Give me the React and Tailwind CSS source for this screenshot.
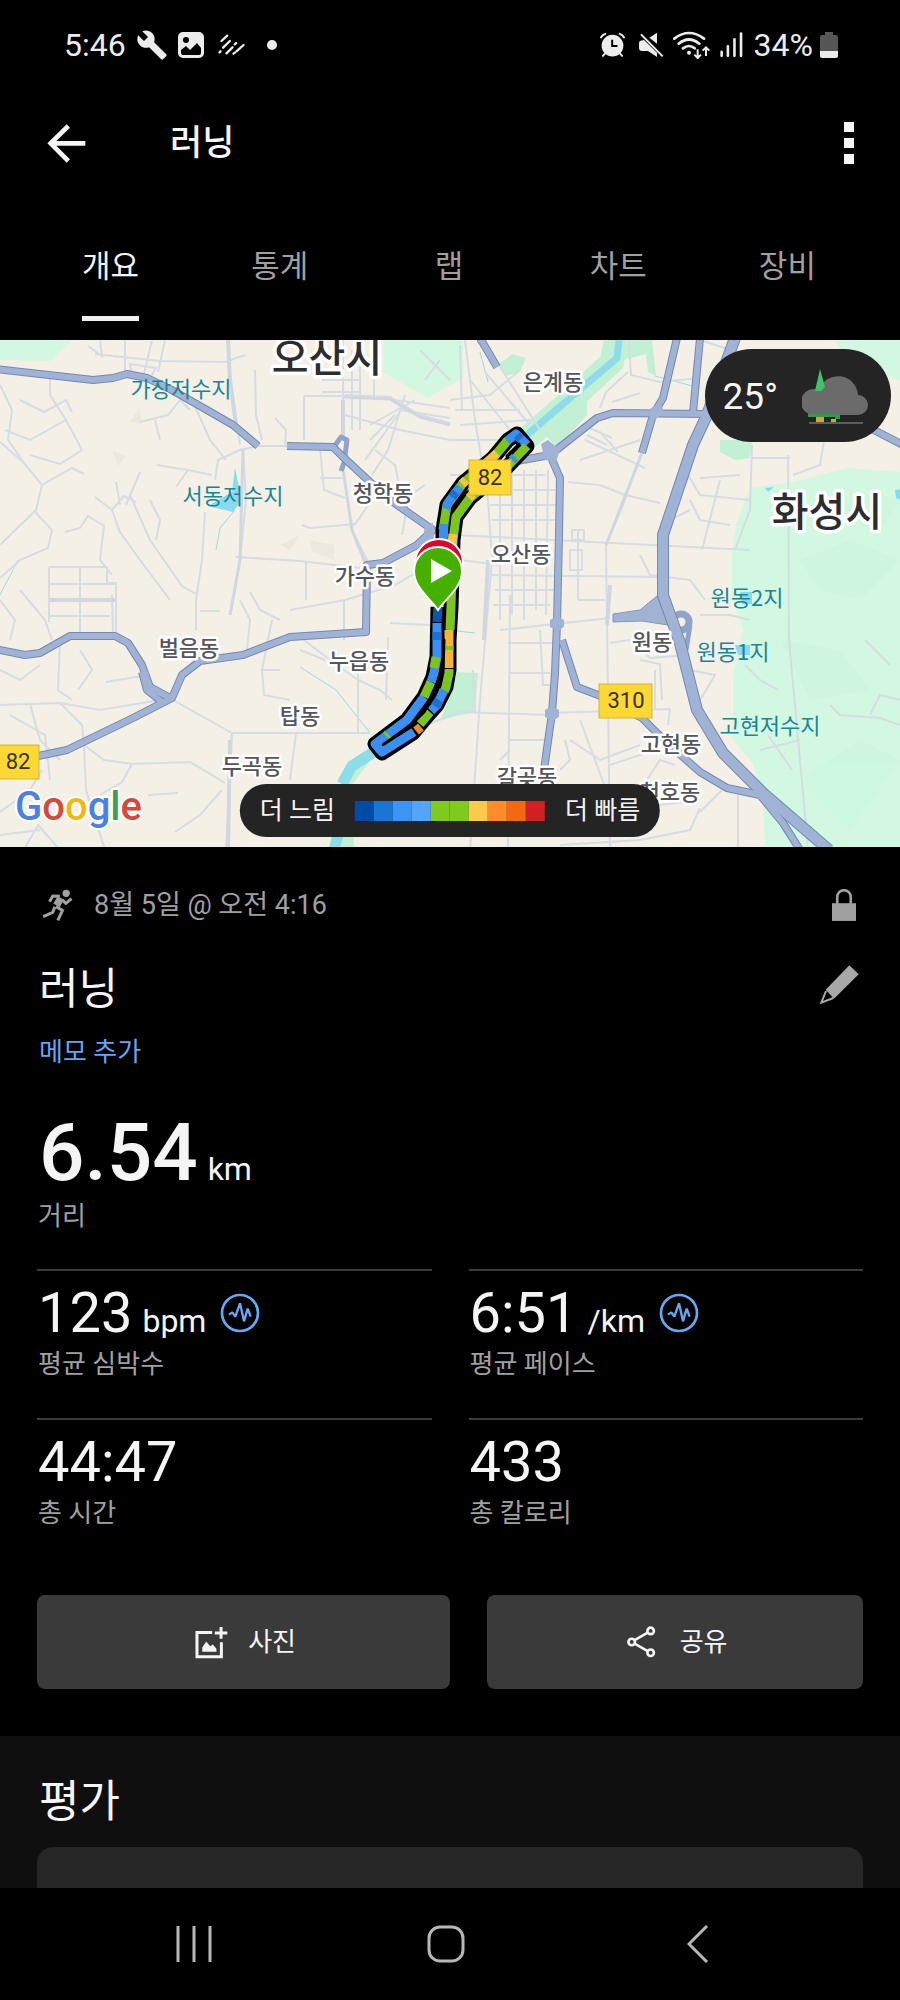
import { MdBuild } from "react-icons/md";

const TABS = ["개요", "통계", "랩", "차트", "장비"];

const PACE_COLORS = [
  "bg-[#004ba6]",
  "bg-[#1a76d2]",
  "bg-[#3c95f2]",
  "bg-[#55a2ff]",
  "bg-[#7fca1f]",
  "bg-[#7fca1f]",
  "bg-[#fbcb4d]",
  "bg-[#ff8c2b]",
  "bg-[#f06b10]",
  "bg-[#d22024]",
];

const STATS = [
  { value: "123", unit: "bpm", label: "평균 심박수", chart: true },
  { value: "6:51", unit: "/km", label: "평균 페이스", chart: true },
  { value: "44:47", label: "총 시간" },
  { value: "433", label: "총 칼로리" },
];

const MAJOR_ROADS = [
  "M-5 369 L93 380 L113 378 L127 374 L147 378 L170 389 L193 402 L233 425 L258 446",
  "M287 446 L333 447 L343 457 L370 482 L393 502 L433 530 L417 545 L383 563 L367 565 L366 632 L290 637 L243 655 L200 661 L182 675 L172 698 L133 718 L67 750 L10 762",
  "M-5 649 L25 655 L40 653 L70 636 L115 636 L128 643 L142 665 L150 687 L170 698",
  "M142 672 L147 690 L162 702",
  "M517 461 L550 455 L597 418 L613 413 L707 414",
  "M550 455 L560 478 L559 535 L557 623 L555 673 L552 713 L544 770",
  "M677 338 L663 398 L653 415 L642 453",
  "M700 338 L693 413",
  "M480 338 L497 367",
  "M562 640 L577 687 L598 695 L642 718 L657 733 L683 757 L700 772 L727 788 L760 795 L783 823 L800 850",
  "M870 428 L905 446",
];

const HIGHWAY =
  "M735 338 L707 415 L693 445 L663 535 L663 595 L680 643 L697 710 L723 753 L763 793 L829 850";

const LOCAL_ROADS = [
  "M125 340 L125 372 M152 340 L143 378 M165 340 L158 372 M100 340 L102 356 L88 346",
  "M95 354 L160 361 L225 362 L245 355 M228 340 L228 362 L236 420 M130 364 L156 368 L150 378 L132 376 Z",
  "M50 378 L50 395 L66 420 L82 450 M66 420 L30 440 L5 430 M82 450 L60 464 L30 455 M0 442 L24 463 L42 485 L36 510 L0 545",
  "M0 385 L12 410 L8 440 L24 463 M20 400 L44 412 L66 400 L72 412 M42 485 L72 468 L84 474",
  "M35 512 L52 530 L48 548 L20 560 L0 578 M65 532 L80 528 L88 516 L104 526 L100 560 L112 575",
  "M95 497 L112 510 L120 532 L140 560 L170 600 M112 510 L124 496 L136 502 M116 482 L120 505",
  "M130 495 L150 540 L182 586 L196 594 M150 500 L160 520 L156 540 M140 472 L126 505",
  "M49 567 L107 567 M49 567 L49 622 M80 567 L80 632 M107 567 L107 583 L116 583 L116 632 M49 584 L116 584 M49 616 L110 616",
  "M157 465 L188 470 L212 475 M188 470 L176 487 M215 480 L218 460 L240 450 L258 446 L287 446",
  "M193 402 L210 440 L226 460 M140 422 L168 415 L180 400 L190 410 M155 420 L160 440",
  "M243 450 L246 500 L240 560 L230 615 M205 512 L202 560 L196 600 L196 630 M228 362 L240 445",
  "M255 370 L256 415 L262 440 M275 418 L286 430 L285 446 M304 396 L304 440 M304 396 L345 396",
  "M236 557 L300 561 L360 568 M306 561 L306 600 M302 525 L310 528 L355 524 L372 500",
  "M320 448 L324 490 L345 498 M320 478 L345 478 M343 340 L343 440 M343 469 L352 530 L372 570",
  "M345 395 L390 397 L420 415 L450 423 M345 415 L400 430 L450 440 M360 350 L360 430 M374 345 L374 400",
  "M352 350 L352 430 M322 380 L360 380 M322 392 L360 392 M370 425 L415 400 M370 440 L395 415 M365 460 L405 405",
  "M405 395 L388 450 L372 475 M375 450 L395 465 L400 490 M410 490 L402 535 M425 485 L403 500",
  "M395 400 L450 408 M400 410 L450 418 M440 360 L425 380 M420 350 L450 380",
  "M240 600 L250 620 L247 650 M250 592 L260 610 L280 620 M290 610 L345 600 L395 585 L437 560",
  "M300 637 L330 660 L358 680 L380 690 L392 700 M272 620 L262 670 L280 670 M262 670 L264 695 L290 700",
  "M173 700 L232 733 L260 733 L370 733 M232 733 L230 780 L226 850 M232 733 L228 765 M296 733 L290 780",
  "M358 650 L358 733 M344 600 L344 640 M388 637 L386 700 M390 623 L430 625 M300 650 L325 660",
  "M0 705 L60 703 L100 710 L172 698 M60 703 L82 725 L84 745 L104 760 L132 764 L190 762 L225 783",
  "M30 704 L40 740 L60 760 M10 715 L45 735 L50 780 M84 745 L86 790 L105 850 M132 764 L122 782 L100 795",
  "M0 670 L20 680 L40 665 M60 640 L58 690 L72 700 M80 650 L92 670 L78 690 M106 682 L142 676",
  "M0 812 L30 790 L42 770 M0 835 L40 830 M148 795 L178 793 M175 832 L200 815 L222 790 M25 848 L38 825 L60 850",
  "M0 600 L15 620 L10 640 M20 590 L45 620 L52 640 M112 595 L113 632",
];

const CITY_ROADS = [
  "M465 340 L475 420 L488 500 L492 560 L480 700 L470 850 M450 400 L490 395 L520 370 M500 367 L540 430",
  "M455 410 L520 410 M460 425 L530 420 M450 440 L500 440 M470 380 L510 430 M485 372 L530 425",
  "M460 345 L462 410 M450 475 L545 475 M450 490 L555 490 M490 505 L557 505 M492 520 L555 520",
  "M500 480 L500 620 M512 470 L512 615 M524 470 L524 620 M536 470 L536 610 M548 470 L546 615",
  "M455 535 L750 550 M490 575 L660 577 M495 590 L555 590 M493 605 L550 605 M460 560 L500 565",
  "M500 630 L610 618 M508 643 L557 643 M510 595 L508 850 M540 630 L543 685 L552 685 M510 673 L552 673",
  "M568 482 L600 485 L625 495 L660 503 M640 455 L625 500 L606 545 L607 620 L610 850",
  "M585 440 L645 468 M580 460 L640 440 M600 432 L618 452 M578 530 L578 600 M578 600 L605 600",
  "M572 530 L584 530 L584 540 L572 540 Z M570 550 L582 550 L582 570 L570 570 Z M587 435 L607 445 M590 428 L612 438",
  "M629 340 L631 375 L660 382 L700 378 M628 372 L606 392 L600 408 M612 402 L640 393",
  "M752 445 L750 510 L735 550 M752 458 L790 458 M788 455 L789 640 L808 848 M825 435 L820 465 L793 475",
  "M685 470 L700 495 L750 500 M700 478 L740 475 M720 480 L702 550 M690 500 L700 520 L730 525",
  "M640 555 L650 575 L690 580 L705 600 M670 520 L690 510 M700 340 L725 348",
  "M550 715 L460 712 L400 735 M552 713 L670 709 M670 709 L668 725 M580 720 L610 800 M655 670 L655 710",
  "M610 643 L630 640 L650 658 L690 655 M640 660 L660 664 L662 700 M690 670 L715 675 L700 700",
  "M510 740 L545 740 M570 740 L600 760 L640 745 M610 765 L655 750 M600 790 L660 805 L700 800 M700 808 L690 830 L640 840 L560 845",
  "M738 795 L738 848 M700 812 L722 790 M745 665 L760 680 L778 690 M768 735 L792 770 M760 750 L800 740",
  "M830 705 L840 715 L880 718 L900 725 M865 640 L890 665 M870 715 L880 695 L900 700 M700 615 L730 615 L750 620",
  "M560 770 L570 760 L565 740 M500 760 L510 750 M640 790 L660 760 L675 765 M475 712 L473 670",
];

const PLACE_LABELS = [
  ["은계동", 553, 382],
  ["청학동", 383, 493],
  ["가수동", 365, 576],
  ["오산동", 521, 554],
  ["벌음동", 189, 648],
  ["누읍동", 359, 661],
  ["탑동", 300, 716],
  ["두곡동", 252, 766],
  ["원동", 652, 642],
  ["고현동", 671, 744],
  ["갈곶동", 527, 777],
  ["천호동", 670, 792],
];

const WATER_LABELS = [
  ["가장저수지", 181, 389],
  ["서동저수지", 233, 496],
  ["원동2지", 747, 598],
  ["원동1지", 733, 652],
  ["고현저수지", 770, 726],
];

const ROUTE_OUTLINE =
  "M443 545 L443 530 L447 505 L463 483 L493 458 L508 440 L517 434 L527 446 L507 467 L470 498 L456 517 L453 540 L451 607 L449 640 L449 670 L446 687 L437 705 L428 715 L413 733 L382 753 L375 744 L387 735 L407 720 L424 697 L433 677 L437 657 L438 607";

const ROUTE_SEGMENTS = [
  ["#7cc41f", "M508 440 L493 458 L463 483 L447 505 L443 530"],
  ["#f4c445", "M497 453 L486 463 M466 480 L462 484"],
  ["#3b8ff0", "M460 487 L448 503 L446 509"],
  ["#1f6fd0", "M456 492 L452 497"],
  ["#3b8ff0", "M444 524 L443 545"],
  ["#3b8ff0", "M507 441 L516 434 L527 445"],
  ["#1f6fd0", "M517 435 L521 439"],
  ["#7cc41f", "M527 446 L507 467 L470 498 L456 517 L453 540 L451 607 L450 630"],
  ["#3b8ff0", "M515 457 L512 460"],
  ["#f4c445", "M473 494 L469 498 M453 534 L452 544"],
  ["#f4b43c", "M449 630 L449 668"],
  ["#7cc41f", "M449 646 L449 650 M449 669 L449 673 L446 687 L444 692"],
  ["#3b8ff0", "M444 690 L437 705 L431 711"],
  ["#1f6fd0", "M439 700 L435 706"],
  ["#7cc41f", "M430 712 L420 724"],
  ["#f08a2c", "M421 727 L416 731"],
  ["#3b8ff0", "M414 732 L382 752 L375 744 L387 735 L407 720 L424 697"],
  ["#7cc41f", "M388 734 L386 736 M424 697 L431 682"],
  ["#3b8ff0", "M431 682 L434 673 L437 657 L437 623"],
  ["#7cc41f", "M434 668 L436 657"],
  ["#1f6fd0", "M437 640 L437 632"],
  ["#0f55aa", "M438 607 L437 622"],
];

function RunMap() {
  return (
    <svg
      viewBox="0 340 900 507"
      preserveAspectRatio="xMidYMid slice"
      className="block h-full w-full"
      role="img"
      aria-label="러닝 경로 지도"
    >
      <rect x="0" y="340" width="900" height="507" fill="#f4f0e6" />

      {/* parks and hills */}
      <g fill="#d2f8e2">
        <path d="M0 340 H72 L50 361 L0 360 Z" />
        <path d="M383 340 H463 V378 L427 398 L383 372 Z" />
        <path d="M900 472 L847 468 L793 482 L750 488 L737 522 L732 548 L732 595 L743 630 L733 673 L733 740 L753 763 L763 803 L765 847 H900 Z" />
        <path d="M835 340 H900 V380 L850 365 Z" />
      </g>
      <g fill="#c2f0d5">
        <path d="M498 365 L512 354 L526 358 L520 372 L505 376 Z" />
        <path d="M543 432 L578 405 L587 402 L587 415 L557 448 Z" />
        <path d="M720 440 H752 L750 458 L735 460 L720 452 Z" />
        <path d="M457 672 L478 673 L475 712 L440 720 L452 692 Z" />
        <path d="M605 340 H652 L656 376 L648 372 L646 354 L600 366 Z" />
        <path d="M378 750 L352 785 L354 847 H336 L338 790 L352 760 Z" />
      </g>
      <g fill="#c9f4db" opacity="0.4">
        <path d="M800 560 L850 540 L900 560 L860 600 L820 590 Z" />
        <path d="M780 640 L840 650 L870 690 L810 700 Z" />
        <path d="M800 780 L860 740 L900 760 L850 830 Z" />
        <path d="M850 490 L900 500 L880 530 L840 520 Z" />
      </g>
      <g fill="#ece8dd">
        <path d="M130 422 L139 408 L142 424 Z M112 450 L126 456 L118 466 Z M310 540 L334 545 L334 560 L312 552 Z M280 545 L300 535 L290 550 Z" />
      </g>

      {/* water */}
      <g fill="none" strokeLinejoin="round">
        <path d="M616 340 L612 362 L573 398 L525 440" stroke="#c2f0d5" strokeWidth="24" />
        <path d="M619 340 L617 358 L577 392 L527 435" stroke="#8cdcea" strokeWidth="7" />
        <path d="M374 752 L352 766 L342 784 M338 835 L334 850" stroke="#8cdcea" strokeWidth="11" />
        <path
          d="M235 510 L220 528 L216 550 M300 667 L336 690 L370 733 M0 595 L18 560 M480 352 L488 382 M655 376 L700 388 M457 631 L475 633 M200 611 L220 611"
          stroke="#9adbe4"
          strokeWidth="1"
        />
      </g>
      <g fill="#86dcee">
        <path d="M235 468 L239 488 L238 505 L233 512 L208 506 L232 492 Z" />
        <path d="M765 488 L774 487 L768 492 Z M895 490 L900 489 V500 L896 498 Z M735 645 H750 V655 H738 Z M740 592 H752 V604 H742 Z" />
      </g>

      {/* streets */}
      <g fill="none" stroke="#d6dce3" strokeWidth="2">
        {LOCAL_ROADS.map((d) => (
          <path key={d} d={d} />
        ))}
        {CITY_ROADS.map((d) => (
          <path key={d} d={d} />
        ))}
      </g>
      <g fill="none" stroke="#d0d7e1" strokeWidth="4">
        <path d="M228 340 L230 380 L236 425 M343 400 L343 440 M49 600 H115 M488 560 L484 640 M610 585 L607 625 M230 740 L228 850" />
        <path d="M642 453 L606 545 M343 469 L352 530 L366 565 M243 450 L240 560 L230 615 M343 397 L390 399 L420 417 L450 425" strokeWidth="3" />
      </g>

      {/* trunk roads */}
      <g fill="none" strokeLinejoin="round">
        <circle cx="681" cy="622" r="8" stroke="#90a4ca" strokeWidth="7" />
        <path d="M690 625 L686 650" stroke="#90a4ca" strokeWidth="5" />
        <path
          d="M613 614 L640 610 L657 596 L668 625 L642 621 L613 622 Z"
          fill="#a0b3d4"
          stroke="#8297c0"
          strokeWidth="1"
        />
        <path
          d="M334 447 L341 437 L347 440 L345 456 M345 460 L341 471"
          stroke="#90a4ca"
          strokeWidth="5"
        />
        {MAJOR_ROADS.map((d) => (
          <path key={d} d={d} stroke="#7388b4" strokeWidth="8" />
        ))}
        <path d={HIGHWAY} stroke="#7388b4" strokeWidth="12" />
        {MAJOR_ROADS.map((d) => (
          <path key={d} d={d} stroke="#a0b3d4" strokeWidth="6" />
        ))}
        <path d={HIGHWAY} stroke="#a0b3d4" strokeWidth="10" />
      </g>
      <g fill="#a0b3d4">
        <path d="M550 620 L557 616 L564 620 V627 L557 631 L550 627 Z" />
        <path d="M545 710 L552 706 L559 710 V717 L552 721 L545 717 Z" />
        <path d="M541 444 L548 440 L560 450 L556 462 L545 460 Z" />
        <path d="M650 409 L660 402 L664 411 L655 420 Z" />
        <path d="M425 525 L433 523 L434 540 L422 546 Z" />
      </g>

      {/* labels */}
      <g
        textAnchor="middle"
        strokeLinejoin="round"
        className="font-['Noto_Sans_CJK_KR',sans-serif] text-[22px] font-medium"
      >
        <g fill="#1b8496" className="font-normal">
          {WATER_LABELS.map(([name, x, y]) => (
            <text key={name} x={x} y={y + 8}>
              {name}
            </text>
          ))}
        </g>
        <g fill="#54565b" stroke="#ffffff" strokeWidth="5" paintOrder="stroke">
          {PLACE_LABELS.map(([name, x, y]) => (
            <text key={name} x={x} y={y + 8}>
              {name}
            </text>
          ))}
        </g>
        <g
          fill="#2b2d31"
          stroke="#ffffff"
          strokeWidth="7"
          paintOrder="stroke"
          className="text-[40px]"
        >
          <text x="327" y="372">오산시</text>
          <text x="827" y="526">화성시</text>
        </g>
      </g>

      {/* recorded track */}
      <g fill="none" strokeLinejoin="round">
        <path d={ROUTE_OUTLINE} stroke="#000000" strokeWidth="15" />
        {ROUTE_SEGMENTS.map(([color, d]) => (
          <path key={d} d={d} stroke={color} strokeWidth="9" />
        ))}
        <path
          d="M519 444 L507 456 M444 640 L443 668 L436 692 L424 712 L409 727 L384 744"
          stroke="#000000"
          strokeWidth="3"
          strokeLinecap="round"
        />
      </g>

      <g
        textAnchor="middle"
        className="font-[Roboto,sans-serif] text-[22px]"
      >
        <g fill="#fcd835" stroke="#d3b43a" strokeWidth="1">
          <rect x="469" y="460" width="42" height="35" />
          <rect x="599" y="684" width="53" height="34" />
          <rect x="-6" y="745" width="45" height="34" />
        </g>
        <g fill="#3a3015">
          <text x="490" y="485">82</text>
          <text x="626" y="708">310</text>
          <text x="18" y="769">82</text>
        </g>
      </g>

      {/* start and finish pins */}
      <g stroke="#ffffff" strokeWidth="2">
        <path d="M439 602 C431 590 415 579 415 563 A24 24 0 0 1 463 563 C463 579 447 590 439 602 Z" fill="#e4002b" />
        <path d="M438 610 C430 598 414 588 414 571 A24 24 0 0 1 462 571 C462 588 446 598 438 610 Z" fill="#45b000" />
      </g>
      <path d="M431 559 L452 571 L431 583 Z" fill="#ffffff" />

      <text
        x="15"
        y="820"
        stroke="#ffffff"
        strokeWidth="4"
        strokeLinejoin="round"
        paintOrder="stroke"
        className="font-[Roboto,sans-serif] text-[40px] font-medium"
      >
        <tspan fill="#4a80e8">G</tspan>
        <tspan fill="#d8483b">o</tspan>
        <tspan fill="#f0b90f">o</tspan>
        <tspan fill="#4a80e8">g</tspan>
        <tspan fill="#3a9f57">l</tspan>
        <tspan fill="#d8483b">e</tspan>
      </text>
    </svg>
  );
}

function StatusBar() {
  return (
    <div className="flex h-[90px] items-center justify-between pr-[62px] pl-16 text-[32px] leading-9 text-[#ececec]">
      <div className="flex items-center gap-[10px]">
        <span>5:46</span>
        <MdBuild size={32} />
        <svg width="26" height="26" viewBox="0 0 26 26">
          <path
            fill="currentColor"
            fillRule="evenodd"
            d="M5 0 H21 A5 5 0 0 1 26 5 V21 A5 5 0 0 1 21 26 H5 A5 5 0 0 1 0 21 V5 A5 5 0 0 1 5 0 Z M3 18 V21 Q3 23 5 23 H21 Q23 23 23 21 V16 L19 11 L12 18 L8 14 Z M8 5 A3 3 0 1 0 8 11 A3 3 0 1 0 8 5 Z"
          />
        </svg>
        <svg width="27" height="22" viewBox="653 102 80 66" className="ml-1">
          <path
            d="M663 123 L680 107 M668 143 L688 123 M657 157 L660 154 M678 160 L696 142 M703 133 L707 129 M699 161 L703 158 M708 154 L729 135"
            fill="none"
            stroke="currentColor"
            strokeWidth="7"
            strokeLinecap="round"
          />
        </svg>
        <span className="ml-3 size-[10px] rounded-full bg-[#ececec]" />
      </div>
      <div className="flex items-center gap-[9px]">
        <svg width="25" height="26" viewBox="449 96 76 78">
          <circle cx="487" cy="137" r="33" fill="currentColor" />
          <path
            d="M452 112 Q456 104 465 101 M522 112 Q518 104 509 101 M465 160 L458 168 M509 160 L516 168"
            stroke="currentColor"
            strokeWidth="6"
            strokeLinecap="round"
            fill="none"
          />
          <path d="M486 119 V138 H502" stroke="#000000" strokeWidth="6" fill="none" />
        </svg>
        <svg width="26" height="26" viewBox="561 96 76 78" className="ml-1">
          <path d="M594 113 L617 98 V131 Z" fill="currentColor" />
          <path
            d="M568 122 L578 120 L617 158 V171 L590 153 H572 Q563 153 563 144 V130 Q563 123 568 122 Z"
            fill="currentColor"
          />
          <path d="M569 103 L634 169" stroke="currentColor" strokeWidth="6" />
        </svg>
        <svg width="38" height="28" viewBox="671 91 114 84">
          <path
            d="M675 114 Q719 80 764 114 M688 129 Q719 104 750 129 M701 143 Q719 129 736 143"
            fill="none"
            stroke="currentColor"
            strokeWidth="8"
            strokeLinecap="round"
          />
          <circle cx="719" cy="156" r="6" fill="currentColor" />
          <path
            d="M745 146 V171 M735 162 L745 172 L755 162 M770 166 V141 M760 150 L770 140 L780 150"
            fill="none"
            stroke="currentColor"
            strokeWidth="6"
          />
        </svg>
        <svg width="23" height="26" viewBox="807 96 70 78" className="mr-[2px]">
          <path
            d="M812 156 V168 M831 139 V168 M851 118 V168 M871 100 V168"
            stroke="currentColor"
            strokeWidth="8"
            strokeLinecap="round"
          />
        </svg>
        <span>34%</span>
        <svg width="18" height="26" viewBox="0 0 18 26" className="-ml-[2px]">
          <path d="M5 0 H13 V3 H16 Q18 3 18 5 V19 H0 V5 Q0 3 2 3 H5 Z" fill="#565656" />
          <path d="M0 19 H18 V24 Q18 26 16 26 H2 Q0 26 0 24 Z" fill="currentColor" />
        </svg>
      </div>
    </div>
  );
}

function HeartRateIcon() {
  return (
    <svg width="40" height="40" viewBox="660 132 120 120" fill="none" stroke="#65a8f5">
      <circle cx="720" cy="192" r="54" strokeWidth="8" />
      <path
        d="M687 197 L697 190 L706 203 L720 163 L732 217 L743 179 L752 203"
        strokeWidth="7"
        strokeLinejoin="bevel"
      />
    </svg>
  );
}

function Stat({ stat }) {
  return (
    <div className="border-t-2 border-[#3b3b3b] pt-[14px] pb-[38px] pl-px">
      <div className="flex h-14 items-center gap-[14px]">
        <div className="flex items-baseline gap-[10px]">
          <span className="text-[56px] leading-14">{stat.value}</span>
          {stat.unit && <span className="text-[32px] leading-10">{stat.unit}</span>}
        </div>
        {stat.chart && (
          <button type="button" aria-label={`${stat.label} 차트`}>
            <HeartRateIcon />
          </button>
        )}
      </div>
      <p className="mt-[7px] text-[26px] leading-8 text-[#a0a0a0]">{stat.label}</p>
    </div>
  );
}

export default function App() {
  return (
    <div className="flex min-h-screen flex-col bg-black font-[Roboto,'Noto_Sans_CJK_KR',sans-serif] text-[#f5f5f5]">
      <StatusBar />

      <header className="flex h-[106px] items-center pr-[46px] pl-[47px]">
        <button type="button" aria-label="뒤로">
          <svg width="39" height="39" viewBox="140 370 117 117" fill="none" stroke="currentColor">
            <path d="M255 428 H152 M204 376 L151 428 L204 481" strokeWidth="14" />
          </svg>
        </button>
        <h1 className="ml-[84px] pt-[2px] text-[35px] leading-10 font-medium">러닝</h1>
        <button type="button" aria-label="더보기" className="ml-auto flex flex-col gap-[6px]">
          <span className="size-[10px] bg-[#f5f5f5]" />
          <span className="size-[10px] bg-[#f5f5f5]" />
          <span className="size-[10px] bg-[#f5f5f5]" />
        </button>
      </header>

      <div role="tablist" className="grid h-36 grid-cols-5 pr-7 pl-[26px]">
        {TABS.map((tab, i) => (
          <button
            key={tab}
            type="button"
            role="tab"
            aria-selected={i === 0}
            className="flex flex-col items-center justify-end pb-[19px]"
          >
            <span
              className={`border-b-[5px] pb-[31px] text-[31px] leading-9 ${
                i === 0 ? "border-[#f0f0f0]" : "border-transparent text-[#a0a0a0]"
              }`}
            >
              {tab}
            </span>
          </button>
        ))}
      </div>

      <div className="relative h-[507px] overflow-hidden">
        <RunMap />
        <div className="absolute top-[9px] right-[9px] flex h-[93px] items-center gap-6 rounded-full bg-[#242424] pt-[2px] pr-[22px] pl-[18px]">
          <span className="text-[37px] leading-10">25°</span>
          <svg width="67" height="56" viewBox="0 0 67 56">
            <path
              d="M12 46 A13 13 0 1 1 17 21 A20 20 0 0 1 56 26 A10 10 0 0 1 56 46 Z"
              fill="#6b6b6b"
            />
            <path d="M18 0 L23 18 L19 22 L13 22 Z" fill="#3fc463" />
            <path d="M6 45 H38 V50 H33 V48 H6 Z" fill="#2f9e49" />
            <path d="M14 48 H22 V53 H14 Z M29 50 H34 V53 H29 Z" fill="#ea9a3e" />
            <path d="M7 54 H61" stroke="#5c5c5c" strokeWidth="2" />
          </svg>
        </div>
        <div className="absolute bottom-[10px] left-1/2 flex h-[53px] -translate-x-1/2 items-center gap-5 rounded-full bg-[#242424] px-5 text-[25px] leading-8 whitespace-nowrap">
          <span>더 느림</span>
          <div className="flex">
            {PACE_COLORS.map((color, i) => (
              <span key={i} className={`h-5 w-[19px] ${color}`} />
            ))}
          </div>
          <span>더 빠름</span>
        </div>
      </div>

      <main className="px-[37px] pt-[40px]">
        <div className="flex h-9 items-center pr-[7px] pl-[5px] text-[#a0a0a0]">
          <svg width="31" height="32" viewBox="125 112 92 96" fill="none" stroke="currentColor">
            <circle cx="197" cy="125" r="11" fill="currentColor" stroke="none" />
            <path d="M181 139 L168 161" strokeWidth="22" />
            <path
              d="M178 134 L157 133 L147 150 M186 145 L196 155 L213 141 M166 165 L186 176 L172 206 M163 165 L157 182 L128 195"
              strokeWidth="9"
              strokeLinejoin="round"
            />
          </svg>
          <span className="ml-[21px] text-[27px] leading-9">8월 5일 @ 오전 4:16</span>
          <svg width="24" height="32" viewBox="155 83 73 97" className="ml-auto">
            <path d="M155 126 H228 V180 H155 Z" fill="currentColor" />
            <path
              d="M171 128 V107 A20 20 0 0 1 212 107 V128"
              fill="none"
              stroke="currentColor"
              strokeWidth="8"
            />
          </svg>
        </div>

        <div className="mt-[38px] flex h-14 items-start justify-between pr-1 pl-[2px]">
          <h2 className="text-[43px] leading-14">러닝</h2>
          <button type="button" aria-label="이름 편집" className="pt-1 text-[#a8a8a8]">
            <svg width="39" height="39" viewBox="120 314 117 117">
              <path d="M208 315 L236 342 L162 415 L137 388 Z" fill="currentColor" />
              <path
                d="M138 392 L124 427 L160 413"
                fill="none"
                stroke="currentColor"
                strokeWidth="6"
              />
            </svg>
          </button>
        </div>
        <button type="button" className="mt-[19px] block pl-[2px] text-[26px] leading-8 text-[#62a6f5]">
          메모 추가
        </button>

        <div className="mt-[45px] flex items-baseline gap-[10px] pl-[2px]">
          <span className="text-[80px] leading-[80px] font-medium">6.54</span>
          <span className="text-[32px] leading-10">km</span>
        </div>
        <p className="mt-[7px] pl-px text-[26px] leading-8 text-[#a0a0a0]">거리</p>

        <div className="mt-[37px] grid grid-cols-2 gap-x-[37px]">
          {STATS.map((stat) => (
            <Stat key={stat.label} stat={stat} />
          ))}
        </div>

        <div className="mt-7 flex gap-[37px]">
          <button
            type="button"
            className="flex h-[94px] flex-[11] items-center justify-center gap-5 rounded-lg bg-[#3a3a3a] pl-1 text-[26px] leading-8"
          >
            <svg width="33" height="33" viewBox="586 1126 100 98">
              <path
                d="M638 1145 H592 V1218 H666 V1174 M665 1128 V1164 M646 1146 H684"
                fill="none"
                stroke="currentColor"
                strokeWidth="9"
              />
              <path d="M608 1203 V1190 L620 1172 L632 1186 L640 1181 L651 1194 V1203 Z" fill="currentColor" />
            </svg>
            사진
          </button>
          <button
            type="button"
            className="flex h-[94px] flex-[10] items-center justify-center gap-6 rounded-lg bg-[#3a3a3a] pl-1 text-[26px] leading-8"
          >
            <svg
              width="29"
              height="32"
              viewBox="530 1130 88 98"
              fill="none"
              stroke="currentColor"
              strokeWidth="8"
            >
              <circle cx="602" cy="1145" r="10" />
              <circle cx="544" cy="1179" r="10" />
              <circle cx="602" cy="1212" r="10" />
              <path d="M553 1173 L593 1150 M553 1184 L593 1207" />
            </svg>
            공유
          </button>
        </div>
      </main>

      <section className="mt-[47px] flex grow flex-col bg-[#0f0f0f] px-[37px] pt-[38px]">
        <h2 className="pl-[2px] text-[44px] leading-14">평가</h2>
        <div className="mt-[17px] min-h-10 grow rounded-t-2xl bg-[#262626]" />
      </section>

      <nav className="grid h-28 grid-cols-3 items-center pr-[76px] pl-[68px] text-[#b8b8b8]">
        <button type="button" aria-label="최근 앱" className="flex justify-center">
          <svg width="36" height="38" viewBox="0 0 36 38" stroke="currentColor" strokeWidth="3">
            <path d="M2 1 V37 M18 1 V37 M34 1 V37" />
          </svg>
        </button>
        <button type="button" aria-label="홈" className="flex justify-center">
          <svg width="38" height="38" viewBox="0 0 38 38" fill="none" stroke="currentColor">
            <rect x="2" y="2" width="34" height="34" rx="11" strokeWidth="3" />
          </svg>
        </button>
        <button type="button" aria-label="뒤로 가기" className="flex justify-center">
          <svg width="22" height="38" viewBox="0 0 22 38" fill="none" stroke="currentColor">
            <path d="M20 1 L2 19 L20 37" strokeWidth="3" />
          </svg>
        </button>
      </nav>
    </div>
  );
}
